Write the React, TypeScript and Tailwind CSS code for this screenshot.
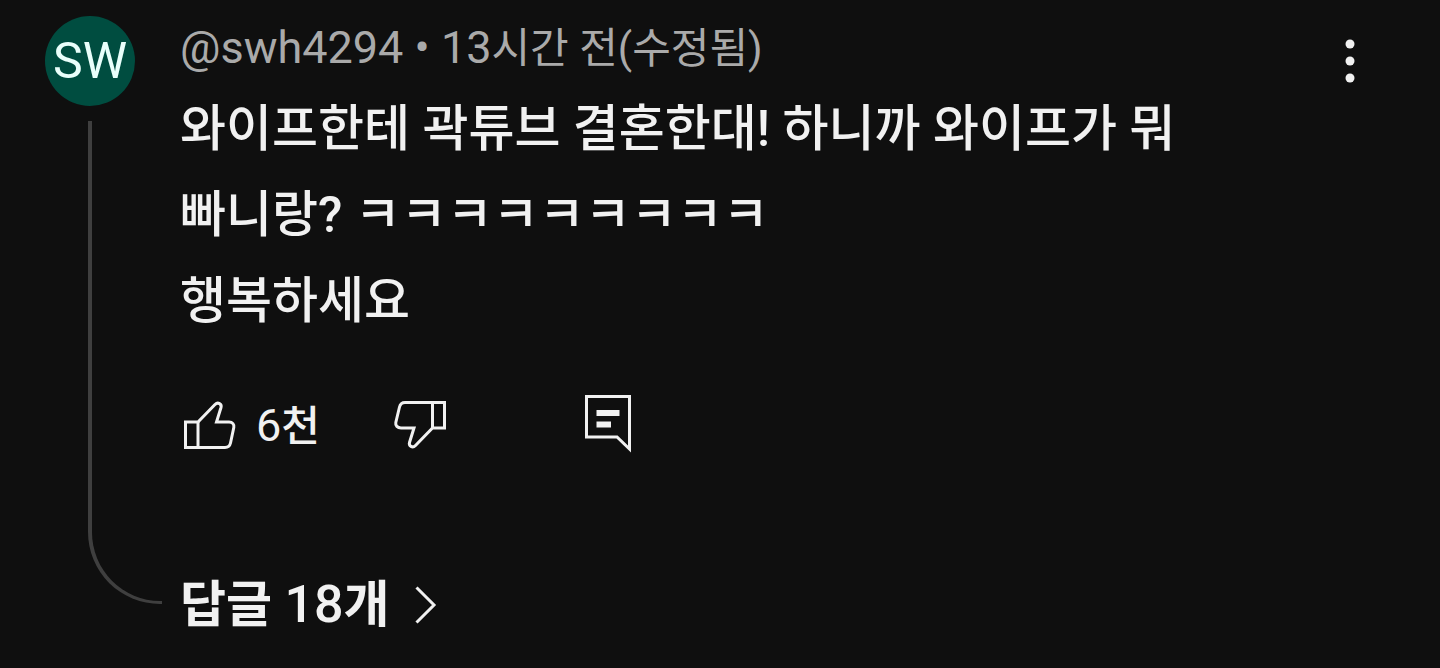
import type { ReactNode } from "react";

const lines = ["와이프한테 곽튜브 결혼한대! 하니까 와이프가 뭐", "빠니랑? ㅋㅋㅋㅋㅋㅋㅋㅋㅋ", "행복하세요"];

function IconButton({ label, children }: { label: string; children: ReactNode }) {
  return (
    <button type="button" aria-label={label} className="flex shrink-0 cursor-pointer items-center">
      {children}
    </button>
  );
}

function LikeIcon() {
  return (
    <svg width="56" height="60" viewBox="0 0 56 60" fill="none" stroke="currentColor" strokeWidth="3" aria-hidden="true">
      <path d="M5.500 28H18L35 10.500C38 7.500 42 10 41 13.500L36.500 28H49C52.500 28 54.500 30.500 53.800 33.500L50.500 49C49.800 52 48 53.500 45 53.500H5.500Z" />
      <path d="M18 28V53.500" />
    </svg>
  );
}

function DislikeIcon() {
  return (
    <svg width="56" height="60" viewBox="0 0 56 60" fill="none" stroke="currentColor" strokeWidth="3" aria-hidden="true">
      <path d="M54.500 34H42.500L25.500 51.500C22.500 54.500 18.500 52 19.500 48.500L24 34H11C7.500 34 5.200 31.500 5.800 28.500L9.500 13C10.200 10 12 8.500 15 8.500H54.500Z" />
      <path d="M42.500 8.500V34" />
    </svg>
  );
}

function ReplyIcon() {
  return (
    <svg width="48" height="60" viewBox="0 0 48 60" fill="none" stroke="currentColor" strokeWidth="3" aria-hidden="true">
      <path d="M3.500 2.500H46.500V55L34 43H3.500Z" />
      <path d="M13.500 19H36.500M13.500 30.500H28" strokeWidth="6" />
    </svg>
  );
}

function MoreIcon() {
  return (
    <svg width="20" height="50" viewBox="0 0 20 50" fill="currentColor" aria-hidden="true">
      <circle cx="10" cy="8" r="4.500" />
      <circle cx="10" cy="25" r="4.500" />
      <circle cx="10" cy="42" r="4.500" />
    </svg>
  );
}

function ChevronIcon() {
  return (
    <svg width="24" height="40" viewBox="0 0 24 40" fill="none" stroke="currentColor" strokeWidth="3" aria-hidden="true">
      <path d="M2.500 2.500L20 20L2.500 37.500" />
    </svg>
  );
}

export default function App() {
  return (
    <main className="min-h-screen bg-[#0f0f0f] font-['Roboto','Noto_Sans_CJK_KR',sans-serif] text-[#f1f1f1]">
      <article className="flex gap-[18px] pt-4 pr-20 pb-7 pl-[45px]">
        <div className="flex w-[117px] shrink-0 flex-col pb-9">
          <div className="flex size-[90px] shrink-0 items-center justify-center rounded-full bg-[#004d40] text-[50px] text-[#e9fffb]">
            SW
          </div>
          <div className="mt-[15px] ml-[43px] flex-1 rounded-bl-[72px] border-b-[3px] border-l-4 border-[#3f3f3f]" />
        </div>
        <div className="min-w-0 flex-1">
          <header className="flex items-start justify-between">
            <p className="text-[42px] leading-[64px] text-[#aaaaaa]">
              <span className="text-[45px]">@swh4294 • 13</span>시간 전(수정됨)
            </p>
            <div className="pt-5">
              <IconButton label="더보기">
                <MoreIcon />
              </IconButton>
            </div>
          </header>
          <div className="text-[50px] leading-[86px] font-medium">
            {lines.map((line) => (
              <p key={line}>{line}</p>
            ))}
          </div>
          <div className="mt-[50px] flex h-[60px] items-center">
            <div className="flex w-[210px] items-center gap-5">
              <IconButton label="좋아요">
                <LikeIcon />
              </IconButton>
              <span className="pt-1 text-[42px] leading-[60px] font-medium">
                <span className="text-[45px] font-normal">6</span>천
              </span>
            </div>
            <div className="flex w-[193px]">
              <IconButton label="싫어요">
                <DislikeIcon />
              </IconButton>
            </div>
            <IconButton label="답글 달기">
              <ReplyIcon />
            </IconButton>
          </div>
          <button type="button" className="mt-[116px] flex cursor-pointer items-center gap-6 text-[50px] leading-[70px] font-bold">
            <span>
              답글 <span className="text-[52px] font-medium">18</span>개
            </span>
            <ChevronIcon />
          </button>
        </div>
      </article>
    </main>
  );
}
